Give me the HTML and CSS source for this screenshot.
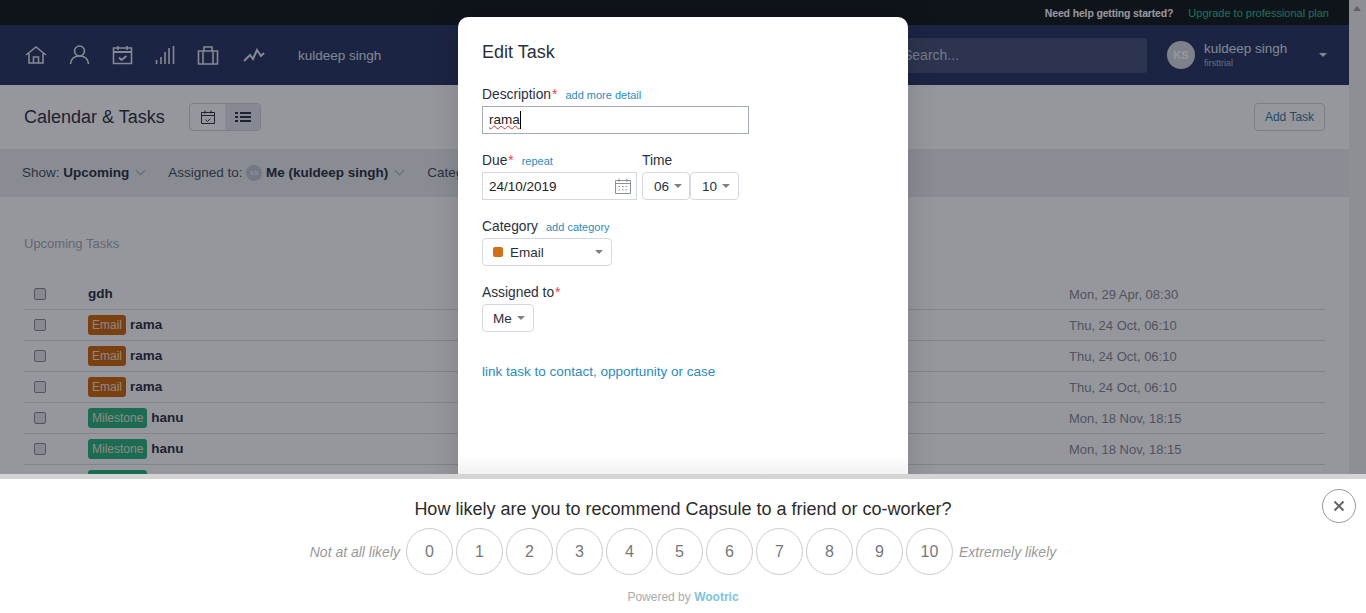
FILE: index.html
```html
<!DOCTYPE html>
<html lang="en">
<head>
  <meta charset="UTF-8" />
  <title>Calendar &amp; Tasks</title>
  <link rel="stylesheet" href="styles.css">
</head>
<body>
  <div class="page">
    <div class="main">
      <div class="topbar">
        <span class="help">Need help getting started?</span>
        <a class="upgrade" href="#">Upgrade to professional plan</a>
      </div>

      <nav class="nav">
        <svg class="nav-icon" viewBox="0 0 22 22"><path d="M1 11 11 3l10 8M4 9.500V19h14V9.500M8.500 19v-6h5v6"/></svg>
        <svg class="nav-icon" viewBox="0 0 22 22"><circle cx="11.500" cy="7" r="5"/><path d="M2.500 20c.5-5 4-8 9-8s8.500 3 9 8"/></svg>
        <svg class="nav-icon" viewBox="0 0 22 22"><path d="M2.500 4h18v15.500h-18zM7 2v4M16 2v4"/><path class="thick" d="M2.500 8h18M8 13.500l2.500 2.500 5-4"/></svg>
        <svg class="nav-icon" viewBox="0 0 22 22"><path d="M2.500 20v-4M7 20v-7M11 20V8M15 20V4M19.500 20V2"/></svg>
        <svg class="nav-icon" viewBox="0 0 22 22"><path d="M1.500 7h19v13h-19zM7 7V3h8v4M6 7v13M16 7v13"/></svg>
        <svg class="nav-icon nav-icon-last" viewBox="0 0 22 22"><path class="thick" d="M1 17l6-6 3 4 4-9 4 6 3-3"/></svg>
        <span class="nav-user">kuldeep singh</span>
        <div class="nav-search">Search...</div>
        <div class="account">
          <span class="account-avatar">KS</span>
          <div class="account-text">
            <div class="account-name">kuldeep singh</div>
            <div class="account-org">firsttrial</div>
          </div>
          <span class="account-caret"></span>
        </div>
      </nav>

      <div class="subheader">
        <h1>Calendar &amp; Tasks</h1>
        <div class="toggle">
          <span class="toggle-item">
            <svg viewBox="0 0 14 14"><path d="M.5 2.500h13v11H.5zM.5 5.500h13M4 .5v3M10 .5v3M4.500 9.500l2 2 3-3"/></svg>
          </span>
          <span class="toggle-item toggle-active">
            <svg viewBox="0 0 16 12"><path d="M0 1h3v2H0zM5 1h11v2H5zM0 5h3v2H0zM5 5h11v2H5zM0 9h3v2H0zM5 9h11v2H5z"/></svg>
          </span>
        </div>
        <button class="add-task">Add Task</button>
      </div>

      <div class="filters">
        <span class="filter">Show: <b>Upcoming</b><i class="chevron"></i></span>
        <span class="filter">Assigned to: <span class="mini-avatar">KS</span> <b>Me (kuldeep singh)</b><i class="chevron"></i></span>
        <span class="filter">Category</span>
      </div>

      <div class="content">
        <h2>Upcoming Tasks</h2>
        <div class="task-row">
          <span class="check"></span>
          <span class="task-name"><b>gdh</b></span>
          <span class="task-date">Mon, 29 Apr, 08:30</span>
        </div>
        <div class="task-row">
          <span class="check"></span>
          <span class="task-name"><span class="badge badge-email">Email</span><b>rama</b></span>
          <span class="task-date">Thu, 24 Oct, 06:10</span>
        </div>
        <div class="task-row">
          <span class="check"></span>
          <span class="task-name"><span class="badge badge-email">Email</span><b>rama</b></span>
          <span class="task-date">Thu, 24 Oct, 06:10</span>
        </div>
        <div class="task-row">
          <span class="check"></span>
          <span class="task-name"><span class="badge badge-email">Email</span><b>rama</b></span>
          <span class="task-date">Thu, 24 Oct, 06:10</span>
        </div>
        <div class="task-row">
          <span class="check"></span>
          <span class="task-name"><span class="badge badge-milestone">Milestone</span><b>hanu</b></span>
          <span class="task-date">Mon, 18 Nov, 18:15</span>
        </div>
        <div class="task-row">
          <span class="check"></span>
          <span class="task-name"><span class="badge badge-milestone">Milestone</span><b>hanu</b></span>
          <span class="task-date">Mon, 18 Nov, 18:15</span>
        </div>
        <div class="task-row">
          <span class="check"></span>
          <span class="task-name"><span class="badge badge-milestone">Milestone</span></span>
        </div>
      </div>
    </div>
    <div class="scrollbar"><span class="scroll-up"></span></div>
  </div>

  <div class="backdrop"></div>

  <div class="modal">
    <div class="modal-title">Edit Task</div>

    <div class="field-label">Description<span class="req">*</span><a href="#">add more detail</a></div>
    <div class="text-input"><span class="typed">rama</span></div>

    <div class="due-row">
      <div>
        <div class="field-label">Due<span class="req">*</span><a href="#">repeat</a></div>
        <div class="date-input">
          24/10/2019
          <svg viewBox="0 0 16 16"><path d="M.5 2.500h15v13H.5zM.5 5.500h15M4 .5v3.500M12 .5v3.500"/><path class="cal-dots" d="M3.500 8.500h2M7 8.500h2M10.500 8.500h2M3.500 12h2M7 12h2M10.500 12h2"/></svg>
        </div>
      </div>
      <div>
        <div class="field-label">Time</div>
        <div class="time-selects">
          <span class="select select-time">06<i class="caret"></i></span>
          <span class="select select-time">10<i class="caret"></i></span>
        </div>
      </div>
    </div>

    <div class="field-label">Category<a href="#">add category</a></div>
    <div class="select select-category"><span class="swatch"></span>Email<i class="caret"></i></div>

    <div class="field-label">Assigned to<span class="req">*</span></div>
    <div class="select select-me">Me<i class="caret"></i></div>

    <a class="link-task" href="#">link task to contact, opportunity or case</a>
    <div class="modal-fade"></div>
  </div>

  <div class="survey">
    <div class="survey-question">How likely are you to recommend Capsule to a friend or co-worker?</div>
    <div class="survey-scale">
      <span class="scale-label">Not at all likely</span>
      <span class="score">0</span>
      <span class="score">1</span>
      <span class="score">2</span>
      <span class="score">3</span>
      <span class="score">4</span>
      <span class="score">5</span>
      <span class="score">6</span>
      <span class="score">7</span>
      <span class="score">8</span>
      <span class="score">9</span>
      <span class="score">10</span>
      <span class="scale-label">Extremely likely</span>
    </div>
    <div class="powered">Powered by <b>Wootric</b></div>
    <button class="survey-close">
      <svg viewBox="0 0 12 12"><path d="M1.500 1.500l9 9M10.500 1.500l-9 9"/></svg>
    </button>
  </div>
</body>
</html>
```

FILE: styles.css
```css
* {
  box-sizing: border-box;
}
html, body {
  margin: 0;
  height: 613px;
  overflow: hidden;
}
body {
  font-family: "Liberation Sans", Arial, sans-serif;
  font-size: 14px;
  color: #2f3547;
  background-color: #fff;
  position: relative;
}
a {
  text-decoration: none;
}

.page {
  display: flex;
  height: 613px;
}
.main {
  flex: 1;
  min-width: 0;
}
.scrollbar {
  width: 17px;
  background-color: #f1f1f1;
  padding: 6px 0 0 4px;
}
.scroll-up {
  display: block;
  width: 0;
  border: 4px solid transparent;
  border-top: 0;
  border-bottom: 5px solid #a3a3a3;
}

.topbar {
  height: 25px;
  background-color: #181c20;
  display: flex;
  justify-content: flex-end;
  align-items: center;
  gap: 15px;
  padding-right: 20px;
  font-size: 11px;
}
.help {
  color: #fff;
  font-size: 10.5px;
  font-weight: bold;
  letter-spacing: -.15px;
}
.upgrade {
  color: #2cc295;
}

.nav {
  height: 60px;
  background-color: #2b3966;
  display: flex;
  align-items: center;
  padding: 0 22px 0 25px;
  color: #dfe3ee;
}
.nav-icon {
  width: 22px;
  height: 22px;
  margin-right: 21px;
  fill: none;
  stroke: #e4e7f0;
  stroke-width: 1.6;
}
.nav-icon .thick {
  stroke-width: 2;
}
.nav-icon-last {
  margin-left: 3px;
}
.nav-user {
  margin-left: 12px;
  font-size: 13.5px;
}
.nav-search {
  width: 254px;
  height: 35px;
  margin-left: auto;
  padding: 9px 0 0 10px;
  border-radius: 3px;
  background-color: #49557a;
  color: #c5cbd9;
  font-size: 14px;
}
.account {
  display: flex;
  align-items: center;
  margin-left: 20px;
}
.account-avatar {
  width: 28px;
  height: 28px;
  border-radius: 50%;
  background-color: #d6d9e2;
  color: #fff;
  font-size: 11px;
  font-weight: bold;
  display: flex;
  align-items: center;
  justify-content: center;
}
.account-text {
  margin-left: 9px;
  width: 115px;
}
.account-name {
  font-size: 13.5px;
  line-height: 16px;
}
.account-org {
  font-size: 9px;
  line-height: 12px;
  opacity: .7;
}
.account-caret {
  width: 0;
  border: 4px solid transparent;
  border-top: 4px solid #dfe3ee;
  border-bottom: 0;
}

.subheader {
  height: 64px;
  background-color: #fff;
  display: flex;
  align-items: center;
  padding: 0 24px;
}
.subheader h1 {
  margin: 0;
  font-size: 18px;
  font-weight: normal;
  width: 165px;
}
.toggle {
  display: flex;
  height: 28px;
  width: 72px;
  border: 1px solid #d0d5dd;
  border-radius: 4px;
  overflow: hidden;
}
.toggle-item {
  flex: 1;
  display: flex;
  align-items: center;
  justify-content: center;
}
.toggle-item svg {
  width: 14px;
  height: 14px;
  fill: none;
  stroke: #2f3547;
}
.toggle-active {
  background-color: #e3e7ee;
}
.toggle-active svg {
  width: 16px;
  height: 12px;
  fill: #2f3547;
  stroke: none;
}
.add-task {
  margin-left: auto;
  width: 71px;
  height: 28px;
  font-family: inherit;
  font-size: 12px;
  color: #2f7fa8;
  background-color: #fff;
  border: 1px solid #d0d5dd;
  border-radius: 4px;
}

.filters {
  height: 48px;
  background-color: #e9edef;
  display: flex;
  align-items: center;
  gap: 22px;
  padding: 0 0 2px 22px;
  font-size: 13.5px;
  color: #4a5163;
}
.filter {
  white-space: nowrap;
}
.filter b {
  color: #2f3547;
}
.mini-avatar {
  display: inline-flex;
  width: 16px;
  height: 16px;
  margin: -4px 0;
  border-radius: 50%;
  background-color: #c5c9d6;
  color: #fff;
  font-size: 6px;
  align-items: center;
  justify-content: center;
  vertical-align: 2px;
}
.chevron {
  display: inline-block;
  width: 7px;
  height: 7px;
  margin: 0 2px 3px 8px;
  border-right: 1px solid #a9aeba;
  border-bottom: 1px solid #a9aeba;
  transform: rotate(45deg);
}

.content {
  padding: 0 24px;
}
.content h2 {
  margin: 0;
  padding: 39px 0 27px;
  font-size: 13px;
  line-height: 16px;
  font-weight: normal;
  color: #a8acb5;
}
.task-row {
  height: 31px;
  display: flex;
  align-items: center;
  border-bottom: 1px solid #dcdfe6;
}
.check {
  width: 12px;
  height: 12px;
  margin-left: 10px;
  border: 1px solid #8a8d98;
  border-radius: 2px;
  background-color: #e6e7ea;
}
.task-name {
  flex: 1;
  margin-left: 42px;
  display: flex;
  align-items: center;
  gap: 4px;
  font-size: 13.5px;
  color: #2f3547;
}
.task-name b {
  margin-bottom: 2px;
}
.badge {
  height: 20px;
  line-height: 20px;
  padding: 0 4px;
  border-radius: 3px;
  font-size: 12px;
  font-weight: normal;
  color: #f2e4d8;
}
.badge-email {
  background-color: #d0690f;
}
.badge-milestone {
  background-color: #2cb680;
}
.task-date {
  width: 256px;
  font-size: 13px;
  color: #878b98;
}

.backdrop {
  position: absolute;
  top: 0;
  left: 0;
  right: 0;
  bottom: 0;
  background-color: rgba(5, 8, 20, .42);
}

.modal {
  position: absolute;
  top: 17px;
  left: 458px;
  width: 450px;
  height: 500px;
  padding: 26px 24px;
  background-color: #fff;
  border-radius: 10px;
  box-shadow: 0 0 30px rgba(0, 0, 0, .15);
  color: #2b2f3d;
}
.modal-title {
  font-size: 18px;
  line-height: 18px;
  margin-bottom: 26px;
}
.field-label {
  font-size: 13.8px;
  line-height: 16px;
  margin-bottom: 3px;
}
.field-label a {
  margin-left: 8px;
  font-size: 11px;
  color: #2a8cba;
}
.req {
  color: #e8404a;
  margin-left: 1px;
}
.text-input {
  width: 267px;
  height: 28px;
  border: 1px solid #a5aabb;
  padding: 4px 6px;
  font-size: 13.5px;
  line-height: 18px;
  margin-bottom: 19px;
}
.typed {
  display: inline-block;
  line-height: 18px;
  border-right: 1px solid #000;
  text-decoration: underline wavy #d93025 1px;
  color: #222;
}
.due-row {
  display: flex;
  gap: 5px;
  margin-bottom: 19px;
}
.date-input {
  width: 155px;
  height: 28px;
  border: 1px solid #d3d8e2;
  padding-left: 6px;
  display: flex;
  align-items: center;
  justify-content: space-between;
  padding-right: 5px;
  font-size: 13.5px;
  color: #222;
}
.date-input svg {
  width: 16px;
  height: 16px;
  fill: none;
  stroke: #8d8f96;
}
.date-input .cal-dots {
  stroke-dasharray: 1.5 1;
}
.time-selects {
  display: flex;
}
.select {
  display: flex;
  align-items: center;
  height: 28px;
  border: 1px solid #d3d8e2;
  border-radius: 4px;
  background-color: #fff;
  font-size: 13.5px;
  color: #2b2f3d;
}
.select-time {
  width: 48px;
  padding-left: 11px;
}
.select-time + .select-time {
  width: 49px;
}
.select-category {
  width: 130px;
  padding-left: 10px;
  margin-bottom: 19px;
}
.select-me {
  width: 52px;
  padding-left: 10px;
}
.swatch {
  width: 10px;
  height: 10px;
  border-radius: 2px;
  background-color: #d2701a;
  margin-right: 7px;
}
.caret {
  width: 0;
  margin-left: 5px;
  border: 4px solid transparent;
  border-top: 4px solid #808080;
  border-bottom: 0;
}
.select-category .caret {
  margin-left: auto;
  margin-right: 8px;
}
.link-task {
  display: block;
  margin-top: 32px;
  font-size: 13.5px;
  line-height: 16px;
  color: #2a8cba;
}
.modal-fade {
  position: absolute;
  left: 0;
  right: 0;
  bottom: 43px;
  height: 20px;
  background: linear-gradient(rgba(242, 242, 242, 0), #f2f2f2);
}

.survey {
  position: absolute;
  left: 0;
  right: 0;
  bottom: 0;
  height: 139px;
  border-top: 5px solid #d4d4d4;
  background-color: #fff;
  text-align: center;
}
.survey-question {
  margin-top: 20px;
  font-size: 18px;
  line-height: 20px;
  color: #2b2b2b;
}
.survey-scale {
  display: flex;
  justify-content: center;
  align-items: center;
  gap: 3px;
  margin-top: 9px;
}
.scale-label {
  font-size: 14px;
  font-style: italic;
  color: #999;
  margin: 0 3px;
}
.score {
  width: 47px;
  height: 47px;
  border: 1px solid #ccc;
  border-radius: 50%;
  display: flex;
  align-items: center;
  justify-content: center;
  font-size: 16px;
  color: #777;
}
.powered {
  margin-top: 15px;
  font-size: 12px;
  color: #aaa;
}
.powered b {
  color: #7cc4dc;
}
.survey-close {
  position: absolute;
  top: 10px;
  right: 10px;
  width: 34px;
  height: 34px;
  padding: 0;
  border: 1px solid #999;
  border-radius: 50%;
  background-color: #fff;
  display: flex;
  align-items: center;
  justify-content: center;
}
.survey-close svg {
  width: 12px;
  height: 12px;
  stroke: #666;
  stroke-width: 2;
}
```
